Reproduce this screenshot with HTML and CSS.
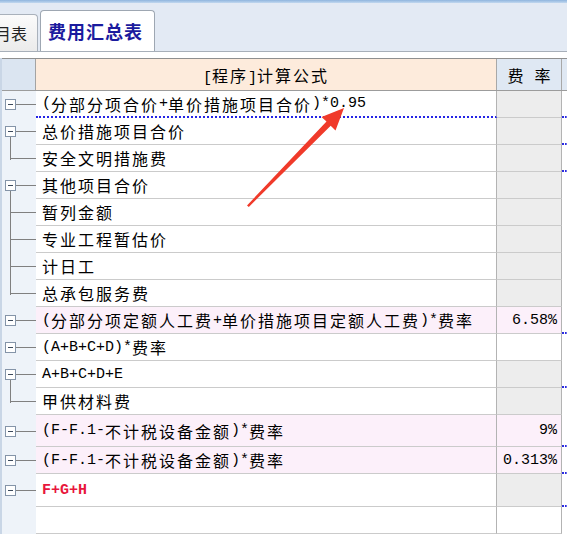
FILE: index.html
```html
<!DOCTYPE html>
<html lang="zh">
<head>
<meta charset="utf-8">
<title>费用汇总表</title>
<link rel="stylesheet" href="styles.css">
</head>
<body>
<div class="topbar"></div>
<div class="tabs">
  <div class="tab-off"><span>月表</span></div>
  <div class="tab-on">费用汇总表</div>
</div>
<div class="gap"></div>
<div class="grid">
  <div class="hdr">
    <div class="h-tree"></div>
    <div class="h-formula"><span><span class="l">[</span>程序<span class="l">]</span>计算公式</span></div>
    <div class="h-rate"><span>费<span class="l">&nbsp;</span>率</span></div>
    <div class="h-extra"></div>
  </div>

  <div class="row">
    <div class="tc b"><span class="box"></span><span class="hl"></span></div>
    <div class="f dot"><span class="l">(</span>分部分项合价<span class="l">+</span>单价措施项目合价<span class="l">)*0.95</span></div>
    <div class="r"></div>
    <div class="x tk"></div>
  </div>
  <div class="row">
    <div class="tc b p"><span class="box"></span><span class="hl"></span></div>
    <div class="f">总价措施项目合价</div>
    <div class="r"></div>
    <div class="x tk"></div>
  </div>
  <div class="row">
    <div class="tc k e"><span class="hl"></span></div>
    <div class="f">安全文明措施费</div>
    <div class="r"></div>
    <div class="x tk"></div>
  </div>
  <div class="row">
    <div class="tc b p"><span class="box"></span><span class="hl"></span></div>
    <div class="f">其他项目合价</div>
    <div class="r"></div>
    <div class="x"></div>
  </div>
  <div class="row">
    <div class="tc k m"><span class="hl"></span></div>
    <div class="f">暂列金额</div>
    <div class="r"></div>
    <div class="x"></div>
  </div>
  <div class="row">
    <div class="tc k m"><span class="hl"></span></div>
    <div class="f">专业工程暂估价</div>
    <div class="r"></div>
    <div class="x"></div>
  </div>
  <div class="row">
    <div class="tc k m"><span class="hl"></span></div>
    <div class="f">计日工</div>
    <div class="r"></div>
    <div class="x"></div>
  </div>
  <div class="row">
    <div class="tc k e"><span class="hl"></span></div>
    <div class="f">总承包服务费</div>
    <div class="r"></div>
    <div class="x"></div>
  </div>
  <div class="row">
    <div class="tc b"><span class="box"></span><span class="hl"></span></div>
    <div class="f pink"><span class="l">(</span>分部分项定额人工费<span class="l">+</span>单价措施项目定额人工费<span class="l">)*</span>费率</div>
    <div class="r pink"><span class="l">6.58%</span></div>
    <div class="x tk"></div>
  </div>
  <div class="row">
    <div class="tc b"><span class="box"></span><span class="hl"></span></div>
    <div class="f"><span class="l">(A+B+C+D)*</span>费率</div>
    <div class="r white"></div>
    <div class="x"></div>
  </div>
  <div class="row">
    <div class="tc b p"><span class="box"></span><span class="hl"></span></div>
    <div class="f"><span class="l">A+B+C+D+E</span></div>
    <div class="r"></div>
    <div class="x tk"></div>
  </div>
  <div class="row">
    <div class="tc k e"><span class="hl"></span></div>
    <div class="f">甲供材料费</div>
    <div class="r"></div>
    <div class="x"></div>
  </div>
  <div class="row tall">
    <div class="tc b"><span class="box"></span><span class="hl"></span></div>
    <div class="f pink"><span class="l">(F-F.1-</span>不计税设备金额<span class="l">)*</span>费率</div>
    <div class="r pink"><span class="l">9%</span></div>
    <div class="x tk"></div>
  </div>
  <div class="row">
    <div class="tc b"><span class="box"></span><span class="hl"></span></div>
    <div class="f pink"><span class="l">(F-F.1-</span>不计税设备金额<span class="l">)*</span>费率</div>
    <div class="r pink"><span class="l">0.313%</span></div>
    <div class="x tk"></div>
  </div>
  <div class="row taller">
    <div class="tc b"><span class="box"></span><span class="hl"></span></div>
    <div class="f"><span class="l red">F+G+H</span></div>
    <div class="r"></div>
    <div class="x tk"></div>
  </div>
  <div class="row">
    <div class="tc"></div>
    <div class="f"></div>
    <div class="r white"></div>
    <div class="x"></div>
  </div>
</div>

<svg class="arrow" width="567" height="534" viewBox="0 0 567 534" aria-hidden="true">
  <polygon points="247,205.5 326.5,121.6 321.5,117 344,108 335.5,130.5 330.7,125.8 248.8,207" fill="#f03a2a"/>
</svg>
</body>
</html>
```

FILE: styles.css
```css
html, body {
  margin: 0;
  padding: 0;
}
body {
  width: 567px;
  height: 534px;
  overflow: hidden;
  background: #ffffff;
  position: relative;
  font-family: "Liberation Mono", "Noto Sans CJK SC", monospace;
}

.topbar {
  height: 3px;
  background: linear-gradient(#8fb5de, #c2d8ef);
}

.tabs {
  height: 48px;
  background: #e3eaf4;
  border-bottom: 1px solid #a7afb9;
  display: flex;
  align-items: flex-end;
}

.tab-off {
  width: 38px;
  height: 37px;
  box-sizing: border-box;
  border: 1px solid #a9b1bb;
  border-left: none;
  border-bottom: none;
  border-top-right-radius: 4px;
  background: linear-gradient(#fbfbfb, #ebebeb);
  font-family: "Noto Sans CJK SC", sans-serif;
  font-size: 16px;
  color: #222222;
  display: flex;
  align-items: center;
  justify-content: flex-end;
  padding-right: 10px;
  overflow: hidden;
  white-space: nowrap;
}

.tab-on {
  margin-left: 2px;
  width: 115px;
  height: 41px;
  box-sizing: border-box;
  border: 1px solid #9ea7b2;
  border-bottom: none;
  border-radius: 4px 4px 0 0;
  background: #ffffff;
  font-family: "Noto Sans CJK SC", sans-serif;
  font-weight: bold;
  font-size: 18px;
  letter-spacing: 1px;
  color: #1b1b9e;
  padding-left: 7px;
  display: flex;
  align-items: center;
  white-space: nowrap;
}

.gap {
  height: 6px;
}

.grid {
  border-left: 2px solid #c9d6e6;
}

.hdr {
  display: grid;
  grid-template-columns: 34px 461px 65px 1fr;
  height: 33px;
  box-sizing: border-box;
  border-top: 1px solid #8f8f8f;
  border-bottom: 1px solid #9c9c9c;
  font-size: 16px;
  letter-spacing: 2px;
  color: #000000;
}
.h-tree {
  background: #dbe5f1;
  border-right: 1px solid #a3a3a3;
}
.h-formula {
  background: #fdebdc;
  border-right: 1px solid #a8a8a8;
  display: flex;
  align-items: center;
  justify-content: center;
  white-space: nowrap;
}
.h-rate {
  background: #dfe8f3;
  border-right: 1px solid #a8a8a8;
  display: flex;
  align-items: center;
  justify-content: center;
  white-space: nowrap;
  padding-left: 2px;
}
.h-extra {
  background: #dfe8f3;
}

.row {
  display: grid;
  grid-template-columns: 34px 461px 65px 1fr;
  height: 27px;
}
.row.tall {
  height: 32px;
}
.row.taller {
  height: 33px;
}

.l {
  letter-spacing: 0;
  font-size: 15px;
}
.red {
  color: #e8163c;
  font-weight: bold;
}

.f, .r {
  box-sizing: border-box;
  border-bottom: 1px solid #cbcbcb;
  border-right: 1px solid #b3b3b3;
  display: flex;
  align-items: center;
  font-size: 16px;
  letter-spacing: 2px;
  color: #000000;
  white-space: nowrap;
  overflow: hidden;
}
.f {
  padding-left: 6px;
  background: #ffffff;
}
.f.dot {
  border-bottom: 2px dotted #2424e6;
}
.r {
  justify-content: flex-end;
  padding-right: 4px;
  background: #ededed;
}
.pink {
  background: #fcf0fa;
}
.r.pink {
  background: #fcf0fa;
}
.r.white {
  background: #ffffff;
}
.x {
  box-sizing: border-box;
  background: #ffffff;
}
.x.tk {
  border-bottom: 2px dotted #2a2ae0;
}

/* tree column */
.tc {
  position: relative;
  background: #eef3f9;
  display: flex;
  align-items: center;
}
.tc.b {
  padding-left: 3px;
}
.tc.k {
  padding-left: 8px;
}
.box {
  flex: none;
  width: 11px;
  height: 11px;
  box-sizing: border-box;
  border: 1px solid #8494a8;
  background: #ffffff;
  display: flex;
  align-items: center;
  justify-content: center;
  position: relative;
  z-index: 1;
}
.box::after {
  content: "";
  width: 5px;
  height: 1px;
  background: #3c4a5c;
}
.hl {
  flex: 1;
  height: 1px;
  background: #808080;
}
.tc.p::after {
  content: "";
  position: absolute;
  left: 8px;
  top: calc(50% + 5px);
  bottom: 0;
  width: 1px;
  background: #808080;
}
.tc.m::before {
  content: "";
  position: absolute;
  left: 8px;
  top: 0;
  bottom: 0;
  width: 1px;
  background: #808080;
}
.tc.e::before {
  content: "";
  position: absolute;
  left: 8px;
  top: 0;
  height: calc(50% + 1px);
  width: 1px;
  background: #808080;
}

.arrow {
  position: absolute;
  left: 0;
  top: 0;
  pointer-events: none;
}
```
